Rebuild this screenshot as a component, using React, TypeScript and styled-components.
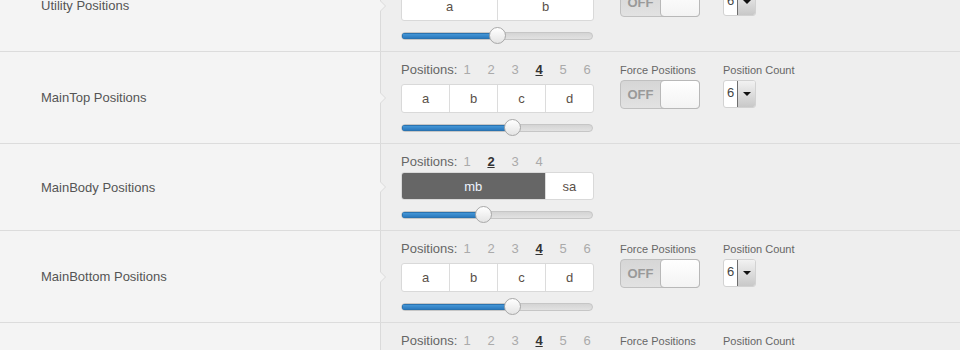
import React from 'react';
import styled, { createGlobalStyle, css } from 'styled-components';

const Global = createGlobalStyle`
  html, body { margin: 0; padding: 0; background: #eeeeee; overflow: hidden; }
  body { font-family: "Liberation Sans", Arial, sans-serif; }
`;

const Page = styled.div`
  margin-top: -40px;
`;

const Row = styled.div`
  display: flex;
  border-bottom: 1px solid #dcdcdc;
`;

const LabelCell = styled.div`
  width: 381px;
  flex: none;
  box-sizing: border-box;
  background: #f4f4f4;
  border-right: 1px solid #dadada;
  position: relative;
  display: flex;
  align-items: center;
  padding-left: 41px;
  font-size: 13px;
  color: #555;
  &::before {
    content: '';
    position: absolute;
    right: -6px;
    top: 50%;
    margin-top: -5px;
    border-style: solid;
    border-width: 5px 0 5px 5px;
    border-color: transparent transparent transparent #dadada;
  }
  &::after {
    content: '';
    position: absolute;
    right: -5px;
    top: 50%;
    margin-top: -5px;
    border-style: solid;
    border-width: 5px 0 5px 5px;
    border-color: transparent transparent transparent #f4f4f4;
  }
`;

const Content = styled.div`
  flex: 1;
  background: #eeeeee;
  padding: 10px 0 7px 20px;
  display: flex;
  align-items: flex-start;
`;

const PosCol = styled.div`
  width: 193px;
  margin-right: 26px;
`;

const Header = styled.div<{ $compact?: boolean }>`
  display: flex;
  font-size: 13px;
  line-height: 16px;
  color: #666;
  margin-bottom: ${(p) => (p.$compact ? 2 : 6)}px;
`;

const NumList = styled.div`
  display: flex;
  gap: 16.8px;
  margin-left: 6px;
`;

const Num = styled.span<{ $active?: boolean }>`
  color: #aaa;
  ${(p) =>
    p.$active &&
    css`
      color: #333;
      font-weight: bold;
      text-decoration: underline;
    `}
`;

const Tiles = styled.div<{ $compact?: boolean }>`
  display: flex;
  height: ${(p) => (p.$compact ? 28 : 29)}px;
  box-sizing: border-box;
  border: 1px solid #d9d9d9;
  border-radius: 3px;
  background: #fff;
  overflow: hidden;
`;

const Tile = styled.div<{ $grow: number; $dark?: boolean }>`
  flex: ${(p) => p.$grow} 1 0;
  display: flex;
  align-items: center;
  justify-content: center;
  font-size: 13px;
  color: #5a5048;
  & + & {
    border-left: 1px solid #dcdcdc;
  }
  ${(p) =>
    p.$dark &&
    css`
      background: #666;
      color: #eef4ff;
    `}
`;

const Slider = styled.div`
  position: relative;
  height: 17px;
  margin-top: 6px;
  display: flex;
  align-items: center;
`;

const Track = styled.div`
  width: 192px;
  height: 8px;
  box-sizing: border-box;
  border: 1px solid #c6c6c6;
  border-radius: 4px;
  background: linear-gradient(#d4d4d4, #e2e2e2);
  overflow: hidden;
  display: flex;
`;

const Fill = styled.div`
  height: 100%;
  background: linear-gradient(#4a9ddc, #2673b8);
  box-shadow: inset 0 0 0 1px #2a73b0;
`;

const Knob = styled.div`
  position: absolute;
  top: 0;
  width: 17px;
  height: 17px;
  box-sizing: border-box;
  border-radius: 50%;
  border: 1px solid #a8a8a8;
  background: linear-gradient(#ffffff, #e4e4e4);
  margin-left: -8.5px;
`;

const Ctrl = styled.div<{ $w: number }>`
  display: flex;
  flex-direction: column;
  width: ${(p) => p.$w}px;
  margin-right: 23px;
`;

const CtrlLabel = styled.div`
  font-size: 11px;
  line-height: 16px;
  color: #666;
  white-space: nowrap;
`;

const Toggle = styled.div`
  margin-top: 2px;
  width: 80px;
  height: 29px;
  box-sizing: border-box;
  border: 1px solid #c0c0c0;
  border-radius: 4px;
  background: linear-gradient(#d6d6d6, #e2e2e2);
  display: flex;
`;

const ToggleOff = styled.div`
  flex: 1;
  display: flex;
  align-items: center;
  justify-content: center;
  font-size: 13px;
  font-weight: bold;
  color: #999;
`;

const ToggleKnob = styled.div`
  width: 40px;
  margin: -1px -1px -1px 0;
  box-sizing: border-box;
  border: 1px solid #b8b8b8;
  border-radius: 4px;
  background: linear-gradient(#ffffff, #f3f3f3);
`;

const Select = styled.div`
  margin-top: 2px;
  width: 33px;
  height: 28px;
  box-sizing: border-box;
  border: 1px solid #d2d2d2;
  border-radius: 3px;
  background: #fff;
  display: flex;
  overflow: hidden;
`;

const SelectValue = styled.div`
  flex: 1;
  padding-left: 3px;
  font-size: 13px;
  line-height: 24px;
  color: #444;
`;

const SelectButton = styled.div`
  width: 17px;
  border-left: 1px solid #6e6e6e;
  background: linear-gradient(#f2f2f2, #c8c8c8);
  display: flex;
  align-items: center;
  justify-content: center;
  &::after {
    content: '';
    border-style: solid;
    border-width: 4px 4px 0 4px;
    border-color: #111 transparent transparent transparent;
  }
`;

type RowData = {
  label: string;
  nums: number;
  active: number;
  tiles: { t: string; g: number; dark?: boolean }[];
  value: number;
  controls: boolean;
  compact?: boolean;
};

const rows: RowData[] = [
  { label: 'Utility Positions', nums: 6, active: 2, tiles: [{ t: 'a', g: 1 }, { t: 'b', g: 1 }], value: 0.5, controls: true },
  { label: 'MainTop Positions', nums: 6, active: 4, tiles: [{ t: 'a', g: 1 }, { t: 'b', g: 1 }, { t: 'c', g: 1 }, { t: 'd', g: 1 }], value: 0.583, controls: true },
  { label: 'MainBody Positions', nums: 4, active: 2, tiles: [{ t: 'mb', g: 3, dark: true }, { t: 'sa', g: 1 }], value: 0.432, controls: false, compact: true },
  { label: 'MainBottom Positions', nums: 6, active: 4, tiles: [{ t: 'a', g: 1 }, { t: 'b', g: 1 }, { t: 'c', g: 1 }, { t: 'd', g: 1 }], value: 0.583, controls: true },
  { label: 'Footer Positions', nums: 6, active: 4, tiles: [{ t: 'a', g: 1 }, { t: 'b', g: 1 }, { t: 'c', g: 1 }, { t: 'd', g: 1 }], value: 0.583, controls: true },
];

export default function App() {
  return (
    <>
      <Global />
      <Page>
        {rows.map((r) => (
          <Row key={r.label}>
            <LabelCell>{r.label}</LabelCell>
            <Content>
              <PosCol>
                <Header $compact={r.compact}>
                  Positions:
                  <NumList>
                    {Array.from({ length: r.nums }, (_, i) => (
                      <Num key={i} $active={i + 1 === r.active}>
                        {i + 1}
                      </Num>
                    ))}
                  </NumList>
                </Header>
                <Tiles $compact={r.compact}>
                  {r.tiles.map((t) => (
                    <Tile key={t.t} $grow={t.g} $dark={t.dark}>
                      {t.t}
                    </Tile>
                  ))}
                </Tiles>
                <Slider>
                  <Track>
                    <Fill style={{ width: `${r.value * 100}%` }} />
                  </Track>
                  <Knob style={{ left: `${r.value * 192}px` }} />
                </Slider>
              </PosCol>
              {r.controls && (
                <>
                  <Ctrl $w={80}>
                    <CtrlLabel>Force Positions</CtrlLabel>
                    <Toggle>
                      <ToggleOff>OFF</ToggleOff>
                      <ToggleKnob />
                    </Toggle>
                  </Ctrl>
                  <Ctrl $w={70}>
                    <CtrlLabel>Position Count</CtrlLabel>
                    <Select>
                      <SelectValue>6</SelectValue>
                      <SelectButton />
                    </Select>
                  </Ctrl>
                </>
              )}
            </Content>
          </Row>
        ))}
      </Page>
    </>
  );
}
